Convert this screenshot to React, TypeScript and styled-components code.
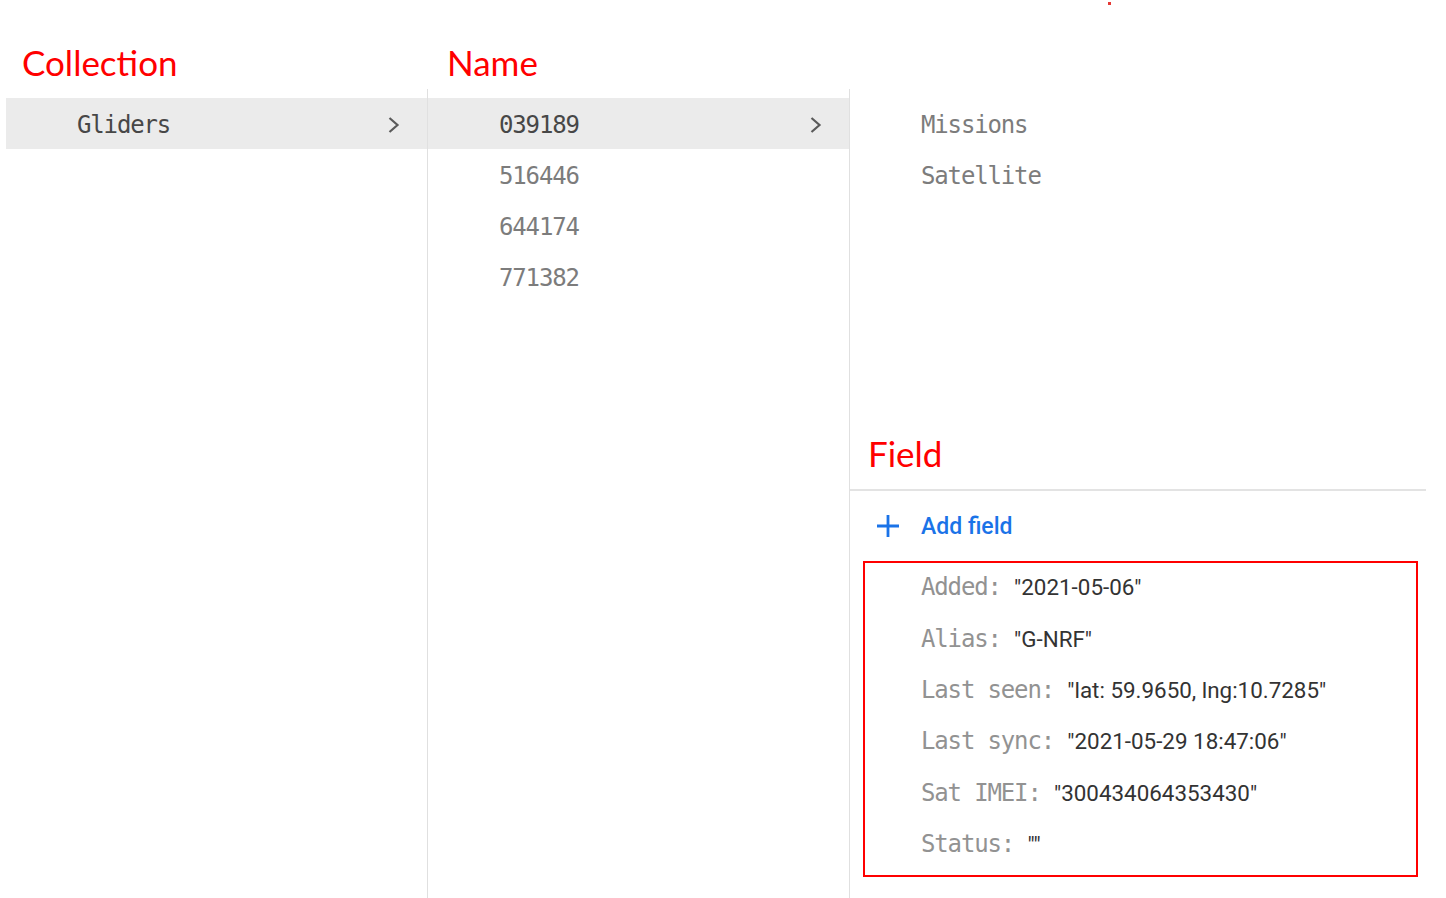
import React from "react";
import styled, { createGlobalStyle } from "styled-components";

const GlobalStyle = createGlobalStyle`
  html, body { margin: 0; padding: 0; background: #ffffff; }
  body { font-family: Roboto, "Noto Sans", sans-serif; }
  * { box-sizing: border-box; }
`;

const Page = styled.div`
  position: relative;
  display: flex;
  align-items: stretch;
  width: 1446px;
  height: 898px;
  padding-left: 6px;
  overflow: hidden;
`;

const StrayDot = styled.span`
  position: absolute;
  left: 1108px;
  top: 2px;
  width: 3px;
  height: 3px;
  background: #e53935;
`;

const Column = styled.div<{ $width: number }>`
  display: flex;
  flex-direction: column;
  width: ${(p) => p.$width}px;
  flex: 0 0 ${(p) => p.$width}px;
`;

const Heading = styled.div<{ $pad: number }>`
  height: 89px;
  padding-top: 41px;
  padding-left: ${(p) => p.$pad}px;
  font-family: Lato, "Noto Sans", sans-serif;
  font-size: 35px;
  line-height: 42px;
  color: #ff0000;
`;

const Panel = styled.div<{ $divider: boolean }>`
  flex: 1;
  display: flex;
  flex-direction: column;
  padding-top: 9px;
  border-right: ${(p) => (p.$divider ? "1px solid #e0e0e0" : "none")};
`;

const Row = styled.div<{ $active?: boolean }>`
  display: flex;
  align-items: center;
  height: 51px;
  padding-left: 71px;
  padding-right: 26px;
  padding-top: 2px;
  background: ${(p) => (p.$active ? "#ebebeb" : "transparent")};
`;

const MonoText = styled.span<{ $tone: "dark" | "mid" | "light"; $fixed?: boolean }>`
  flex: ${(p) => (p.$fixed ? "0 0 auto" : "1")};
  font-family: "DejaVu Sans Mono", "Liberation Mono", monospace;
  font-size: 24px;
  letter-spacing: -1.15px;
  white-space: pre;
  color: ${(p) =>
    p.$tone === "dark" ? "#474747" : p.$tone === "mid" ? "#7c7c7c" : "#929292"};
`;

const Chevron = () => (
  <svg width="14" height="18" viewBox="0 0 14 18" aria-hidden>
    <path d="M2.5 2 L10.5 9 L2.5 16" fill="none" stroke="#5a5a5a" strokeWidth="2.2" />
  </svg>
);

const FieldHeader = styled.div`
  margin-top: 232px;
  padding-left: 18px;
  padding-bottom: 15px;
  font-family: Lato, "Noto Sans", sans-serif;
  font-size: 35px;
  line-height: 42px;
  color: #ff0000;
  border-bottom: 2px solid #e3e3e3;
`;

const AddFieldRow = styled.div`
  display: flex;
  align-items: center;
  gap: 21px;
  height: 70px;
  padding-left: 26px;
  color: #1a73e8;
  font-family: Roboto, "Noto Sans", sans-serif;
  font-weight: 500;
  font-size: 23px;
`;

const FieldBox = styled.div`
  margin-left: 13px;
  width: 555px;
  height: 316px;
  border: 2px solid #ff0000;
`;

const FieldRow = styled.div`
  display: flex;
  align-items: center;
  height: 51.4px;
  padding-left: 56px;
  padding-bottom: 3px;
`;

const FieldValue = styled.span`
  font-family: Roboto, "Noto Sans", sans-serif;
  font-size: 22.4px;
  color: #333333;
  white-space: pre;
`;

const PlusIcon = () => (
  <svg width="24" height="24" viewBox="0 0 24 24" aria-hidden>
    <path d="M12 1 V23 M1 12 H23" stroke="#1a73e8" strokeWidth="2.8" fill="none" />
  </svg>
);

const collections = ["Gliders"];
const names = ["039189", "516446", "644174", "771382"];
const subcollections = ["Missions", "Satellite"];
const fields: [string, string][] = [
  ["Added", '"2021-05-06"'],
  ["Alias", '"G-NRF"'],
  ["Last seen", '"lat: 59.9650, lng:10.7285"'],
  ["Last sync", '"2021-05-29 18:47:06"'],
  ["Sat IMEI", '"300434064353430"'],
  ["Status", '""'],
];

export default function App() {
  return (
    <>
      <GlobalStyle />
      <Page>
        <StrayDot />
        <Column $width={422}>
          <Heading $pad={16}>Collection</Heading>
          <Panel $divider>
            {collections.map((c) => (
              <Row key={c} $active>
                <MonoText $tone="dark">{c}</MonoText>
                <Chevron />
              </Row>
            ))}
          </Panel>
        </Column>
        <Column $width={422}>
          <Heading $pad={19}>Name</Heading>
          <Panel $divider>
            {names.map((n, i) => (
              <Row key={n} $active={i === 0}>
                <MonoText $tone={i === 0 ? "dark" : "mid"}>{n}</MonoText>
                {i === 0 && <Chevron />}
              </Row>
            ))}
          </Panel>
        </Column>
        <Column $width={576}>
          <Heading $pad={18} />
          <Panel $divider={false}>
            {subcollections.map((s) => (
              <Row key={s}>
                <MonoText $tone="mid">{s}</MonoText>
              </Row>
            ))}
            <FieldHeader>Field</FieldHeader>
            <AddFieldRow>
              <PlusIcon />
              <span>Add field</span>
            </AddFieldRow>
            <FieldBox>
              {fields.map(([k, v]) => (
                <FieldRow key={k}>
                  <MonoText $tone="light" $fixed>{`${k}: `}</MonoText>
                  <FieldValue>{v}</FieldValue>
                </FieldRow>
              ))}
            </FieldBox>
          </Panel>
        </Column>
      </Page>
    </>
  );
}
